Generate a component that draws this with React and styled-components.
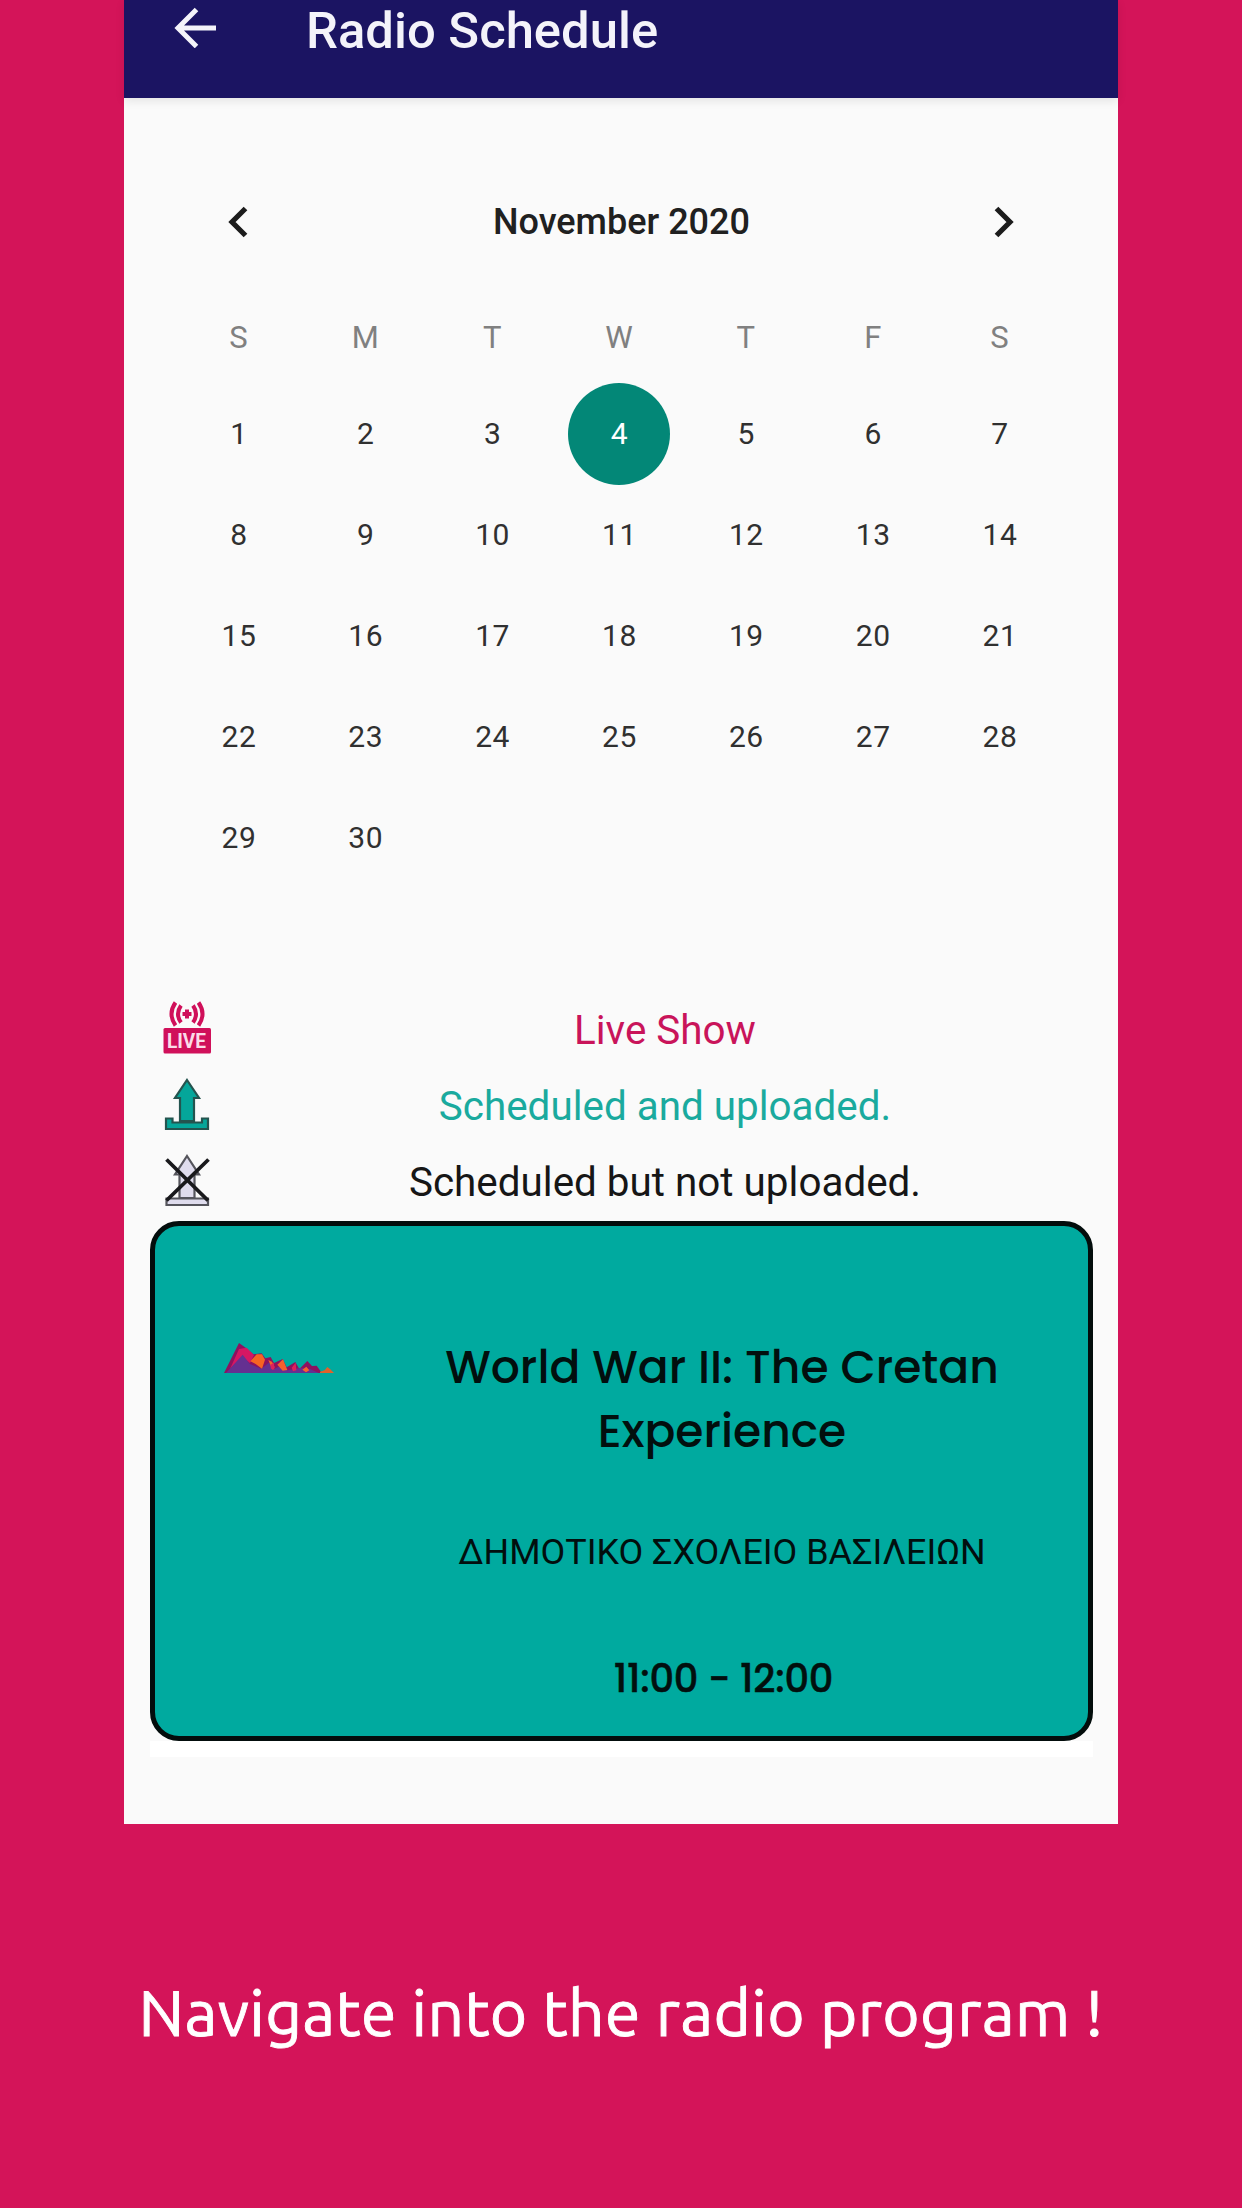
import React from "react";
import styled, { createGlobalStyle } from "styled-components";

const GlobalStyle = createGlobalStyle`
  * { box-sizing: border-box; }
  body { margin: 0; background: #d41459; }
`;

const Page = styled.main`
  display: flex;
  flex-direction: column;
  align-items: center;
  width: 1242px;
  height: 2208px;
  overflow: hidden;
  background: #d41459;
  font-family: Roboto, "Noto Sans", sans-serif;
`;

const Phone = styled.section`
  display: flex;
  flex-direction: column;
  width: 994px;
  height: 1824px;
  background: #fafafa;
`;

const AppBar = styled.header`
  display: flex;
  align-items: flex-start;
  gap: 89px;
  height: 98px;
  padding: 1px 0 0 50px;
  background: #1b1462;
  box-shadow: 0 3px 9px rgba(0, 0, 0, 0.09);
`;

const BackIcon = styled.svg`
  width: 43px;
  height: 41px;
  margin-top: 6px;
`;

const AppTitle = styled.h1`
  margin: 0;
  color: #f4f3fa;
  font-size: 50.8px;
  font-weight: 500;
  line-height: 60px;
`;

const Calendar = styled.div`
  display: flex;
  flex-direction: column;
  padding: 94px 55px 0 51px;
`;

const MonthBar = styled.div`
  display: flex;
  align-items: center;
  justify-content: space-between;
  height: 60px;
  padding: 0 47px 0 52px;
`;

const Chevron = styled.svg`
  width: 22px;
  height: 32px;
  fill: none;
  stroke: #1c1c1c;
  stroke-width: 5.2;
`;

const MonthName = styled.h2`
  margin: 0;
  color: #202020;
  font-size: 36px;
  font-weight: 500;
  line-height: 60px;
`;

const Week = styled.div`
  display: grid;
  grid-template-columns: repeat(7, 1fr);
  height: 101.1px;
  align-items: center;
  justify-items: center;
`;

const WeekHeader = styled(Week)`
  height: 50px;
  margin: 60px 0 21px;
  color: #808080;
  font-size: 31px;
`;

const Day = styled.span`
  display: flex;
  align-items: center;
  justify-content: center;
  width: 102px;
  height: 102px;
  padding: 0 0 2px 1px;
  border-radius: 50%;
  background: ${(p) => (p.$selected ? "#038777" : "transparent")};
  color: ${(p) => (p.$selected ? "#fff" : "#303030")};
  font-size: 30px;
  letter-spacing: 0.6px;
`;

const Legend = styled.ul`
  display: flex;
  flex-direction: column;
  margin: 103.5px 0 0;
  padding: 0 0 0 39px;
  list-style: none;
`;

const LegendRow = styled.li`
  display: flex;
  align-items: center;
  height: 76.4px;
  color: ${(p) => p.$color};
`;

const LegendIcon = styled.svg`
  width: 48px;
  height: 56px;
  margin-bottom: 5px;
`;

const LegendText = styled.span`
  flex: 1;
  padding-left: 1px;
  text-align: center;
  font-size: 40.4px;
`;

const LiveWord = styled.text`
  font-family: Roboto, sans-serif;
  font-size: 20px;
  font-weight: 700;
  fill: #fbdce8;
`;

const Show = styled.article`
  display: flex;
  width: 943px;
  height: 520px;
  margin-left: 26px;
  padding: 108px 66px 0 68px;
  flex-shrink: 0;
  border: 5px solid #030d0c;
  border-radius: 29px;
  background: #00aa9f;
`;

const ShowLogo = styled.svg`
  width: 112px;
  height: 32px;
  margin-top: 8px;
`;

const ShowInfo = styled.div`
  display: flex;
  flex: 1;
  flex-direction: column;
  align-items: center;
  margin-left: 87px;
  color: #020f0e;
  text-align: center;
  white-space: nowrap;
`;

const ShowTitle = styled.h3`
  margin: 1px 0 0;
  font: 500 45.6px/64px Poppins, Inter, sans-serif;
`;

const ShowSchool = styled.p`
  margin: 64px 0 0;
  font-size: 35.9px;
  line-height: 50px;
`;

const ShowTime = styled.p`
  margin: 77px 0 0 3px;
  font: 500 38.4px/50px Poppins, Inter, sans-serif;
  -webkit-text-stroke: 0.5px currentColor;
  letter-spacing: -0.2px;
`;

const ListFooter = styled.div`
  width: 943px;
  height: 16px;
  margin-left: 26px;
  background: #fff;
`;

const Caption = styled.p`
  margin: 148px 0 0;
  color: #fff;
  font: 400 64px/80px Ubuntu, "Noto Sans", sans-serif;
  letter-spacing: 0.35px;
  -webkit-text-stroke: 0.9px currentColor;
  white-space: nowrap;
`;

const WEEKDAYS = ["S", "M", "T", "W", "T", "F", "S"];
const DAYS = Array.from({ length: 30 }, (_, i) => i + 1);
const WEEKS = [0, 7, 14, 21, 28].map((start) => DAYS.slice(start, start + 7));
const SELECTED = 4;

function LiveIcon() {
  return (
    <LegendIcon viewBox="0 0 48 56">
      <rect x="0.5" y="28" width="47.5" height="25.5" rx="1.5" fill="#d0105a" />
      <LiveWord x="4" y="48" textLength="39" lengthAdjust="spacingAndGlyphs">
        LIVE
      </LiveWord>
      <path d="M24 9.500v9M19.500 14h9" stroke="#d0105a" strokeWidth="4" />
      <g fill="none" stroke="#d0105a" strokeWidth="4">
        <path d="M18 5.500q-6 8.500 0 17M30 5.500q6 8.500 0 17" />
        <path d="M12.500 2.500q-8 11.500 0 23M35.500 2.500q8 11.500 0 23" />
      </g>
    </LegendIcon>
  );
}

function UploadIcon() {
  return (
    <LegendIcon viewBox="0 0 48 56">
      <g fill="#05a69a" stroke="#24544f" strokeWidth="2.2">
        <path d="M24 4L36 22H31V45H17V22H12Z" />
        <path d="M3 42.500H9.500V46.500H39V42.500H45V53H3Z" />
      </g>
    </LegendIcon>
  );
}

function NotUploadedIcon() {
  return (
    <LegendIcon viewBox="0 0 48 56">
      <g fill="#dfdced" stroke="#55555c" strokeWidth="2.2">
        <path d="M24 4L36 22.500H31.500V46H16.500V22.500H12Z" />
        <path d="M3.500 46.500H45V53H3.500Z" />
      </g>
      <path d="M3.500 7.500L45 48.500M45.500 7.500L3.500 48.500" stroke="#19191c" strokeWidth="3.8" />
    </LegendIcon>
  );
}

function MountainLogo() {
  return (
    <ShowLogo viewBox="69 67 336 96">
      <path d="M72 160L117 70L135 83L160 104L185 101L196 116L212 112L222 130L248 118L260 143L286 127L298 148L322 124L336 139L350 138L363 156V160Z" fill="#8d1260" />
      <path d="M90 148L117 88L140 84L162 106L150 130L126 112Z" fill="#d51763" />
      <path d="M78 160L128 105L150 133L184 147L208 128L218 150L240 139L262 152L300 145L330 148L356 160Z" fill="#653091" />
      <path d="M151 125L170 104H186L195 120L186 147L167 133Z" fill="#f86423" />
      <path d="M205 121L216 126L224 143L217 150ZM232 135L249 119L262 151L248 153ZM307 150L319 141L328 152L318 158Z" fill="#f7602c" />
      <path d="M211 135L222 130L223 150L213 147ZM275 144L287 129L289 152L279 155Z" fill="#df205c" />
      <path d="M360 156L374 152L382 142L390 148L402 160H360Z" fill="#e0622b" />
    </ShowLogo>
  );
}

const LEGEND = [
  { label: "Live Show", color: "#c9145a", Icon: LiveIcon },
  { label: "Scheduled and uploaded.", color: "#1aaa9e", Icon: UploadIcon },
  { label: "Scheduled but not uploaded.", color: "#161616", Icon: NotUploadedIcon },
];

export default function App() {
  return (
    <Page>
      <GlobalStyle />
      <Phone>
        <AppBar>
          <BackIcon viewBox="0 0 43 41" fill="none" stroke="#f4f3fa" strokeWidth="5">
            <path d="M42 21H4M22.500 2.500L4 21L22.500 39.500" />
          </BackIcon>
          <AppTitle>Radio Schedule</AppTitle>
        </AppBar>

        <Calendar>
          <MonthBar>
            <Chevron viewBox="0 0 22 32">
              <path d="M18.500 2.500L5 16L18.500 29.500" />
            </Chevron>
            <MonthName>November 2020</MonthName>
            <Chevron viewBox="0 0 22 32">
              <path d="M2.500 2.500L16 16L2.500 29.500" />
            </Chevron>
          </MonthBar>
          <WeekHeader>
            {WEEKDAYS.map((d, i) => (
              <span key={i}>{d}</span>
            ))}
          </WeekHeader>
          {WEEKS.map((week) => (
            <Week key={week[0]}>
              {week.map((d) => (
                <Day key={d} $selected={d === SELECTED}>
                  {d}
                </Day>
              ))}
            </Week>
          ))}
        </Calendar>

        <Legend>
          {LEGEND.map(({ label, color, Icon }) => (
            <LegendRow key={label} $color={color}>
              <Icon />
              <LegendText>{label}</LegendText>
            </LegendRow>
          ))}
        </Legend>

        <Show>
          <MountainLogo />
          <ShowInfo>
            <ShowTitle>
              World War II: The Cretan
              <br />
              Experience
            </ShowTitle>
            <ShowSchool>ΔΗΜΟΤΙΚΟ ΣΧΟΛΕΙΟ ΒΑΣΙΛΕΙΩΝ</ShowSchool>
            <ShowTime>11:00 - 12:00</ShowTime>
          </ShowInfo>
        </Show>
        <ListFooter />
      </Phone>
      <Caption>Navigate into the radio program !</Caption>
    </Page>
  );
}
